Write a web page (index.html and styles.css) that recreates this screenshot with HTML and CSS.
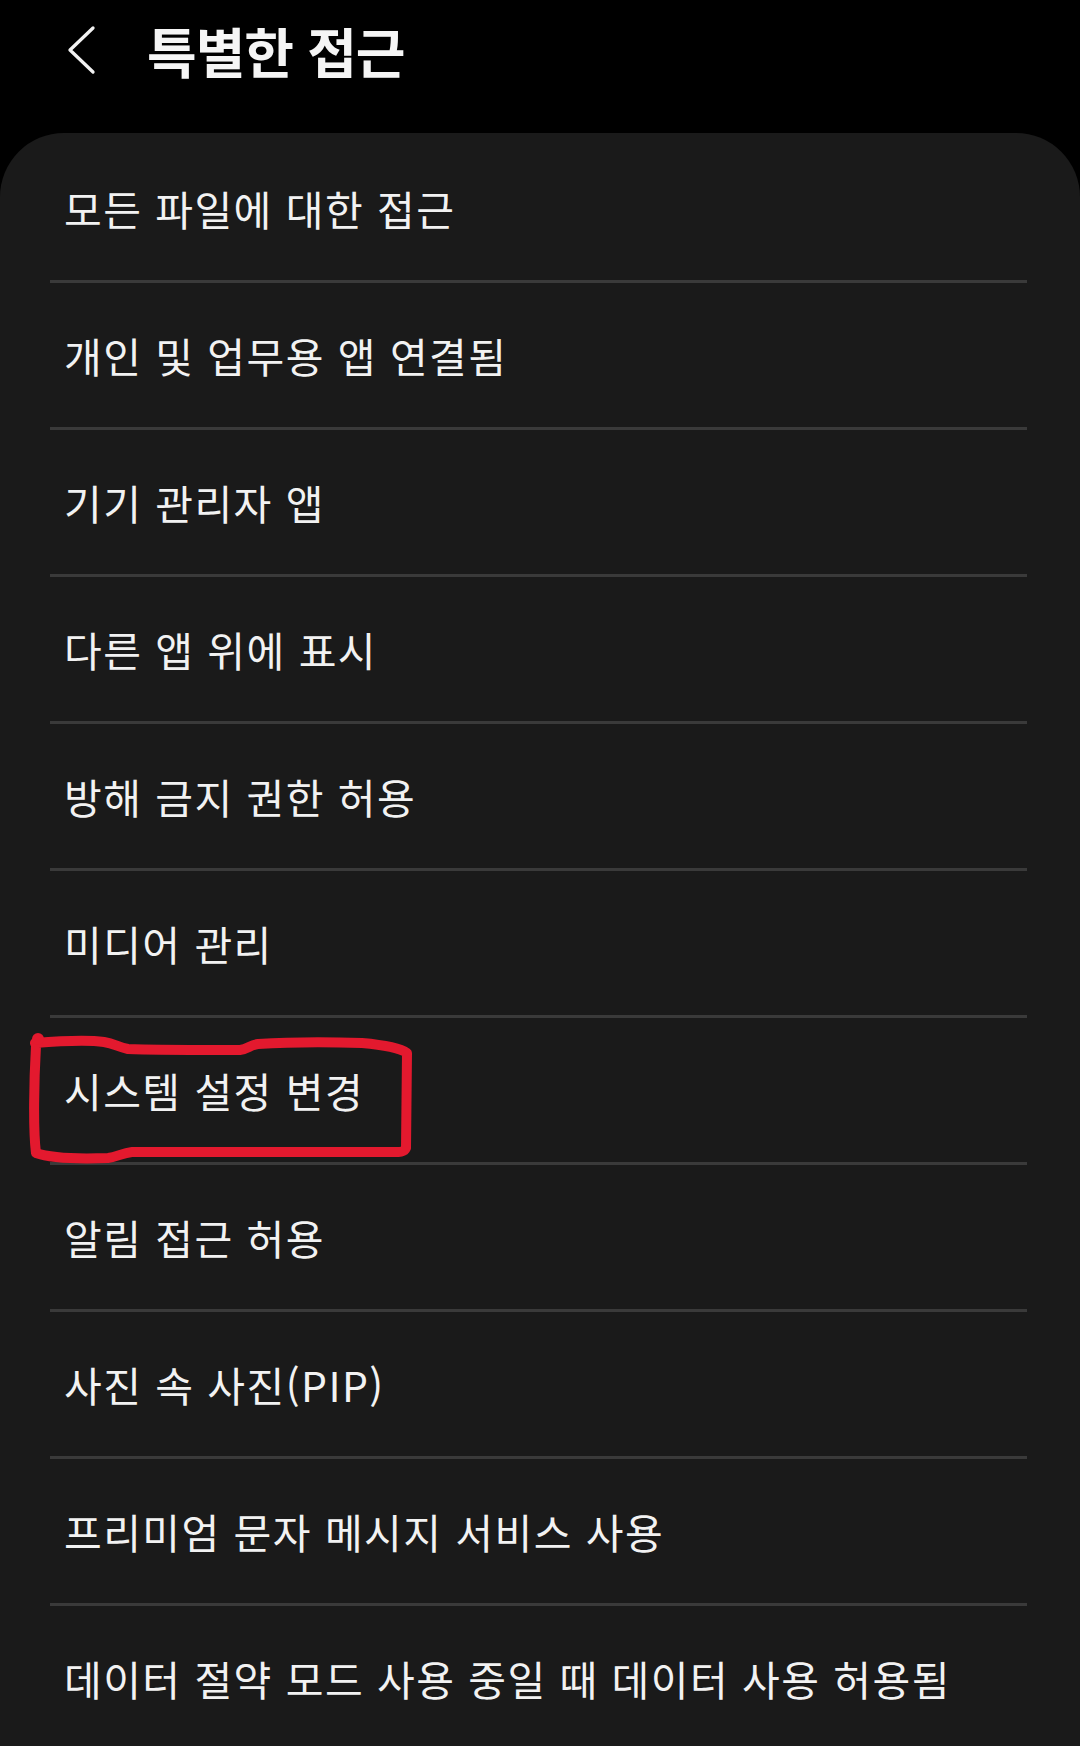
FILE: index.html
```html
<!DOCTYPE html>
<html lang="ko">
<head>
<meta charset="utf-8">
<title>특별한 접근</title>
<link rel="stylesheet" href="styles.css">
</head>
<body>
<div class="screen">
  <header class="topbar">
    <svg class="back" width="30" height="52" viewBox="0 0 30 52">
      <polyline points="26,3 3,25 26,47" fill="none" stroke="#f2f2f2" stroke-width="3.3" stroke-linecap="round" stroke-linejoin="round"/>
    </svg>
    <h1 class="title">특별한 접근</h1>
  </header>
  <main class="card">
    <div class="row"><span class="label">모든 파일에 대한 접근</span></div>
    <div class="row"><span class="label">개인 및 업무용 앱 연결됨</span></div>
    <div class="row"><span class="label">기기 관리자 앱</span></div>
    <div class="row"><span class="label">다른 앱 위에 표시</span></div>
    <div class="row"><span class="label">방해 금지 권한 허용</span></div>
    <div class="row"><span class="label">미디어 관리</span></div>
    <div class="row"><span class="label">시스템 설정 변경</span></div>
    <div class="row"><span class="label">알림 접근 허용</span></div>
    <div class="row"><span class="label">사진 속 사진(PIP)</span></div>
    <div class="row"><span class="label">프리미엄 문자 메시지 서비스 사용</span></div>
    <div class="row last"><span class="label">데이터 절약 모드 사용 중일 때 데이터 사용 허용됨</span></div>
  </main>
  <svg class="markup" width="1080" height="1746" viewBox="0 0 1080 1746">
    <path d="M35,1043 C60,1041 90,1040 104,1042 C115,1044 118,1047 128,1049 C150,1050 200,1050 240,1050 C248,1049 250,1045 258,1044 C290,1042 330,1042 362,1043 C385,1045 400,1048 407,1053 L406,1148 C404,1153 398,1152 385,1152 L132,1152 C122,1153 117,1157 108,1158 C80,1159 50,1158 36,1153 C33,1130 34,1080 36,1046" fill="none" stroke="#e3192e" stroke-width="10" stroke-linecap="round" stroke-linejoin="round"/>
    <circle cx="38" cy="1039" r="6" fill="#e3192e"/>
  </svg>
</div>
</body>
</html>
```
FILE: styles.css
```css
html, body {
  margin: 0;
  padding: 0;
  background: #000;
}
body {
  width: 1080px;
  height: 1746px;
  overflow: hidden;
  font-family: "Noto Sans CJK KR", "Noto Sans", sans-serif;
  color: #f2f2f2;
}
.screen {
  position: relative;
  width: 1080px;
  height: 1746px;
}
.topbar {
  height: 102px;
  margin-bottom: 31px;
  display: flex;
  align-items: center;
  padding-left: 67px;
}
.back {
  display: block;
  margin-top: -1px;
}
.title {
  margin: 0 0 0 50px;
  font-size: 54px;
  font-weight: 700;
  letter-spacing: -1px;
  line-height: 1;
  color: #f5f5f5;
}
.card {
  background: #1a1a1a;
  border-radius: 64px 64px 0 0;
  padding-top: 3px;
  height: 1610px;
}
.row {
  height: 144px;
  margin: 0 53px 0 50px;
  padding-left: 14px;
  border-bottom: 3px solid #3a3a3a;
  display: flex;
  align-items: center;
}
.row.last {
  border-bottom: none;
}
.label {
  font-size: 41px;
  font-weight: 400;
  letter-spacing: 1.45px;
  line-height: 1;
  white-space: nowrap;
}
.markup {
  position: absolute;
  left: 0;
  top: 0;
  pointer-events: none;
}
```
